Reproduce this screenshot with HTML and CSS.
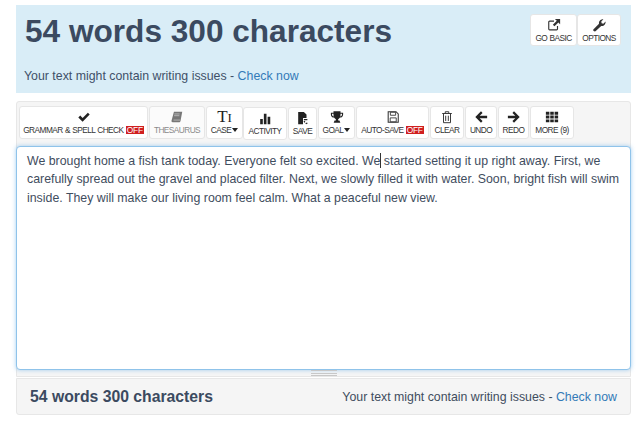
FILE: index.html
```html
<!DOCTYPE html>
<html lang="en">
<head>
<meta charset="utf-8">
<title>Word counter</title>
<link rel="stylesheet" href="styles.css">
</head>
<body>
<header class="banner">
  <div class="banner-text">
    <h1 class="title">54 words 300 characters</h1>
    <p class="notice">Your text might contain writing issues - <a class="link">Check now</a></p>
  </div>
  <div class="banner-actions">
    <button class="tool tool-basic"><svg class="ico" viewBox="0 0 16 16"><path d="M12 9v3.500a1 1 0 0 1-1 1H3a1 1 0 0 1-1-1v-8a1 1 0 0 1 1-1h5" fill="none" stroke="#333" stroke-width="1.300"/><path d="M9 1h6v6l-2-2-4.500 4.500-1.800-1.800L11.200 3.200z" fill="#333"/></svg><span>GO BASIC</span></button>
    <button class="tool tool-options"><svg class="ico" viewBox="0 0 16 16"><path d="M1.500 13 8 6.700C7.500 4 9.500 1.300 13 1.500l-2.400 2.500.4 2 2 .5L15.500 4c.4 3.500-2.500 5.700-5 5L4 15.200c-1 .8-3.500-1.200-2.500-2.200z" fill="#333"/></svg><span>OPTIONS</span></button>
  </div>
</header>

<section class="editor">
  <div class="toolbar">
    <button class="tool t-grammar"><svg class="ico" viewBox="0 0 16 16"><path d="M1.500 8.500 3.700 6.300l2.700 2.700 6-6L14.500 5.200 6.400 13.300z" fill="#222"/></svg><span>GRAMMAR &amp; SPELL CHECK <b class="off">OFF</b></span></button>
    <button class="tool t-thes muted"><svg class="ico" viewBox="0 0 16 16"><path d="M4.500 2h9.500L12 12.500c-.2 1-.8 1.500-2 1.500H3c-1 0-1.500-.8-1.200-2z" fill="#777"/><path d="M4 11.500h7.500M5 4.500h6M4.700 6.500h6" stroke="#ddd" stroke-width=".7"/></svg><span>THESAURUS</span></button>
    <button class="tool t-case"><span class="case-glyph">T<i class="case-i">I</i></span><span>CASE<i class="caret"></i></span></button>
    <button class="tool t-activity low"><svg class="ico" viewBox="0 0 16 16"><path d="M2.500 9h3v6h-3zM6.700 3h3v12h-3zM11 6.500h3V15h-3z" fill="#222"/></svg><span>ACTIVITY</span></button>
    <button class="tool t-save low"><svg class="ico" viewBox="0 0 16 16"><path d="M2.500 1H9l3 3v4H8v7H2.500z" fill="#222"/><path d="M9 9h4v1.500H9zM8.500 12l1.500-1 .7 1.500-1 1zM12.500 13l1 1-2 1.200-.8-1.200z" fill="#222"/></svg><span>SAVE</span></button>
    <button class="tool t-goal"><svg class="ico" viewBox="0 0 16 16"><path d="M4 1.500h8V3h3v2c0 2-1.500 3.500-3.600 3.700C10.800 9.700 10 10.200 9.300 10.500V12h1.500l1 2.500H4.200l1-2.500h1.500v-1.500C6 10.200 5.200 9.700 4.600 8.700 2.500 8.500 1 7 1 5V3h3zM2.300 4.300V5c0 1.200.8 2 1.900 2.300-.2-.9-.2-2-.2-3zM13.700 4.300H12c0 1 0 2.100-.2 3 1.100-.3 1.900-1.100 1.900-2.300z" fill="#222"/></svg><span>GOAL<i class="caret"></i></span></button>
    <button class="tool t-auto"><svg class="ico" viewBox="0 0 16 16"><path d="M2.500 2h9l2.500 2.500V14H2.500z" fill="none" stroke="#333" stroke-width="1.200"/><path d="M5 2.500h6v3.500H5zM4.800 9h6.900v4.500H4.800z" fill="none" stroke="#333"/></svg><span>AUTO-SAVE <b class="off">OFF</b></span></button>
    <button class="tool t-clear"><svg class="ico" viewBox="0 0 16 16"><path d="M2.500 4h11M6 4V2h4v2M4 4v10.500h8V4M6.500 6.500v6M9.500 6.500v6" fill="none" stroke="#333" stroke-width="1.100"/></svg><span>CLEAR</span></button>
    <button class="tool t-undo"><svg class="ico" viewBox="0 0 16 16"><path d="M8 1.500 9.800 3.300 6.500 6.500H15v3H6.500l3.300 3.200L8 14.500 1.500 8z" fill="#222"/></svg><span>UNDO</span></button>
    <button class="tool t-redo"><svg class="ico" viewBox="0 0 16 16"><path d="M8 1.500 6.200 3.300 9.500 6.500H1v3h8.500l-3.300 3.200L8 14.500 14.500 8z" fill="#222"/></svg><span>REDO</span></button>
    <button class="tool t-more"><svg class="ico" viewBox="0 0 16 16"><path d="M1 2h4v3.300H1zM6 2h4v3.300H6zM11 2h4v3.300h-4zM1 6.400h4v3.300H1zM6 6.400h4v3.300H6zM11 6.400h4v3.300h-4zM1 10.800h4v3.300H1zM6 10.800h4v3.300H6zM11 10.800h4v3.300h-4z" fill="#222"/></svg><span>MORE (9)</span></button>
  </div>
  <div class="textbox">We brought home a fish tank today. Everyone felt so excited. We<span class="text-caret"></span> started setting it up right away. First, we carefully spread out the gravel and placed filter. Next, we slowly filled it with water. Soon, bright fish will swim inside. They will make our living room feel calm. What a peaceful new view.</div>
  <div class="resizer"><span class="grip"></span></div>
</section>

<footer class="summary">
  <strong class="summary-count">54 words 300 characters</strong>
  <span class="summary-note">Your text might contain writing issues - <a class="link">Check now</a></span>
</footer>
</body>
</html>
```
FILE: styles.css
```css
* { box-sizing: border-box; }
html, body { height: 100%; }
body {
  margin: 0;
  padding: 5px 9px 0 16px;
  background: #fff;
  font-family: "Liberation Sans", Arial, sans-serif;
  color: #333;
  overflow: hidden;
}
.banner {
  height: 88px;
  background: #d9edf7;
  padding: 9px 10px 0 9px;
  display: flex;
  justify-content: space-between;
  align-items: flex-start;
}
.title {
  margin: -1px 0 0;
  font-size: 31.600px;
  line-height: 36px;
  font-weight: 700;
  color: #3b4a60;
}
.notice {
  margin: 18px 0 0 -1px;
  font-size: 12.350px;
  line-height: 18px;
  color: #3f5068;
}
.link { color: #337ab7; }
.banner-actions {
  display: flex;
}
.tool {
  display: flex;
  flex-direction: column;
  align-items: center;
  justify-content: flex-start;
  height: 33px;
  padding: 3px 0 0;
  margin: 0;
  border: 1px solid #e6e6e6;
  border-radius: 3px;
  background: #fff;
  font-family: "Liberation Sans", Arial, sans-serif;
  font-size: 8.300px;
  letter-spacing: -.55px;
  word-spacing: .5px;
  line-height: 11px;
  color: #333;
  white-space: nowrap;
}
.tool .ico {
  width: 14px;
  height: 14px;
  margin-bottom: 1px;
  display: block;
  flex: none;
}
.muted { background: #fbfbfb; color: #8a8a8a; }
.low { margin-top: 1px; }
.tool-basic { width: 47px; height: 32px; }
.tool-options { width: 44px; height: 32px; }
.off {
  display: inline-block;
  background: #d01f1f;
  color: #fff;
  font-weight: 400;
  letter-spacing: -.2px;
  line-height: 8px;
  padding: 0 1px;
}
.caret {
  display: inline-block;
  width: 0;
  height: 0;
  margin-left: 1px;
  vertical-align: 1px;
  border-left: 3.500px solid transparent;
  border-right: 3.500px solid transparent;
  border-top: 4px solid #222;
}
.case-glyph {
  font-family: "Liberation Serif", serif;
  font-size: 17px;
  letter-spacing: 0;
  line-height: 14px;
  height: 15px;
  color: #222;
}
.case-i { font-style: normal; font-size: 13px; }
.editor {
  margin-top: 8px;
  background: #f5f5f5;
  border: 1px solid #e7e7e7;
  border-radius: 3px 3px 0 0;
  height: 276px;
  display: flex;
  flex-direction: column;
}
.toolbar {
  display: flex;
  align-items: flex-start;
  gap: 1px;
  height: 44px;
  padding: 4px 0 0 2px;
  flex: none;
}
.t-grammar { width: 129px; }
.t-thes { width: 56px; }
.t-case { width: 37px; }
.t-activity { width: 44px; margin-left: -1px; }
.t-save { width: 29px; }
.t-goal { width: 37px; }
.t-auto { width: 73px; }
.t-clear { width: 34px; }
.t-undo { width: 32px; }
.t-redo { width: 31px; }
.t-more { width: 44px; }
.textbox {
  height: 224px;
  flex: none;
  margin: 0 -1px;
  background: #fff;
  border: 1px solid #8fc3ea;
  border-radius: 4px;
  box-shadow: 0 0 4px rgba(102, 175, 233, .6);
  padding: 5px 10px;
  font-size: 12.350px;
  line-height: 18.450px;
  color: #3f4d5e;
}
.text-caret {
  display: inline-block;
  width: 1px;
  height: 15px;
  margin-right: -1px;
  background: #333;
  vertical-align: -3px;
}
.resizer {
  flex: 1;
  display: flex;
  justify-content: center;
  align-items: center;
}
.grip {
  width: 26px;
  height: 6px;
  border-top: 1px solid #c8c8c8;
  border-bottom: 1px solid #c8c8c8;
  background: linear-gradient(#c8c8c8, #c8c8c8) center / 100% 1px no-repeat;
}
.summary {
  margin-top: 1px;
  height: 37px;
  background: #f5f5f5;
  border: 1px solid #e7e7e7;
  border-radius: 0 0 3px 3px;
  padding: 0 13px 0 13px;
  display: flex;
  justify-content: space-between;
  align-items: center;
}
.summary-count {
  font-size: 15.750px;
  color: #3b4a60;
}
.summary-note {
  font-size: 12.350px;
  color: #3f4d5e;
}
```
